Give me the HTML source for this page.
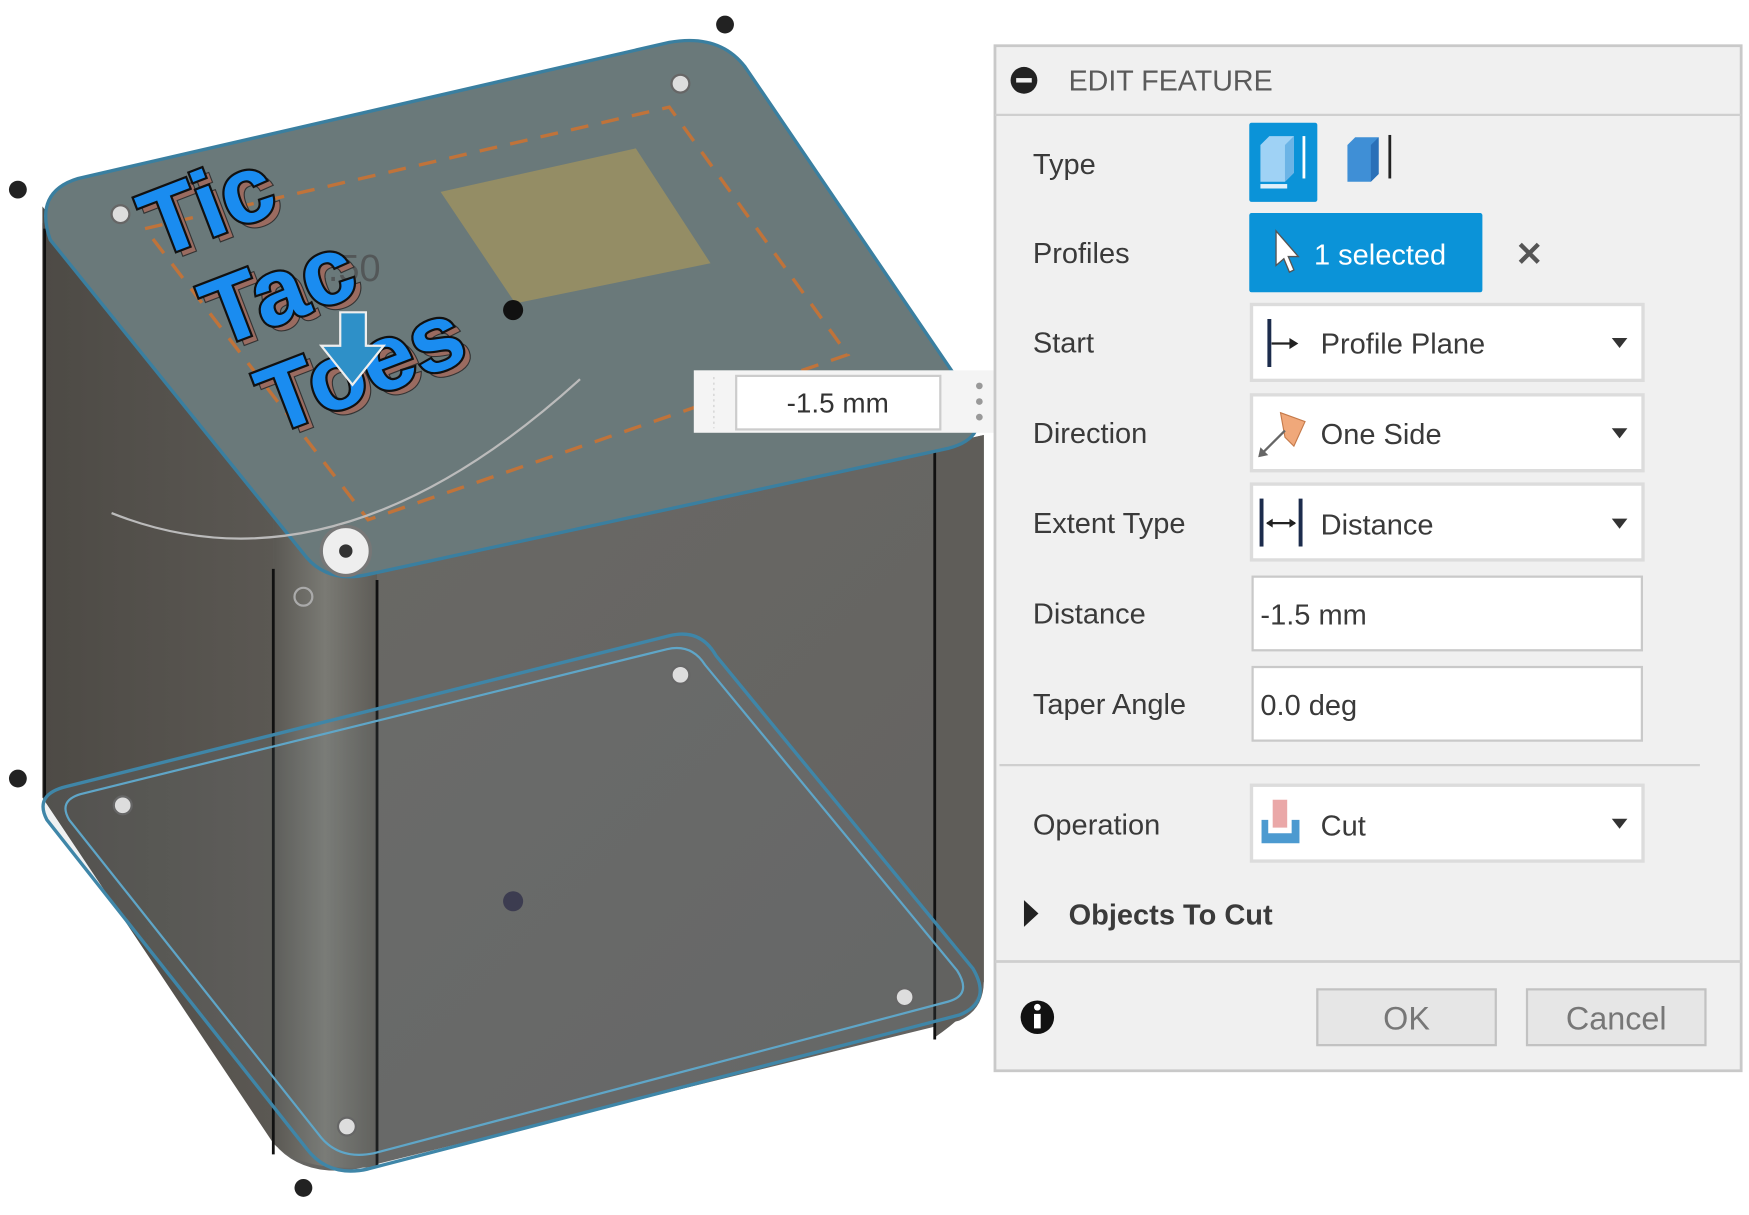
<!DOCTYPE html>
<html><head><meta charset="utf-8"><style>
html,body{margin:0;padding:0;background:#fff;width:1749px;height:1215px;overflow:hidden}
svg{display:block}
text{font-family:"Liberation Sans",Arial,sans-serif}
</style></head><body>
<svg width="1749" height="1215" viewBox="0 0 1568 1089.3" xmlns="http://www.w3.org/2000/svg">
<defs>
<linearGradient id="lf" x1="0" x2="1"><stop offset="0" stop-color="#4d4a45"/><stop offset="1" stop-color="#5b5853"/></linearGradient>
<linearGradient id="cr" x1="0" x2="1"><stop offset="0" stop-color="#5a5853"/><stop offset="0.5" stop-color="#7a7a74"/><stop offset="1" stop-color="#5e5c57"/></linearGradient>
<linearGradient id="ff" x1="0" y1="0" x2="1" y2="1"><stop offset="0" stop-color="#6c6b67"/><stop offset="1" stop-color="#636260"/></linearGradient>
</defs>
<path d="M38 200 L38 715 L250 1030 Q275 1055 320 1048 L860 915 Q882 905 882 880 L882 390 L300 520 Z" fill="url(#ff)"/>
<path d="M38 185 L38 715 L245 1025 L245 460 Z" fill="url(#lf)"/>
<path d="M245 460 L245 1025 Q270 1052 338 1046 L338 510 Z" fill="url(#cr)"/>
<path d="M838 400 L882 390 L882 880 Q875 905 838 930 Z" fill="#5f5d59"/>
<g stroke="#111" stroke-width="2.5">
<line x1="40" y1="205" x2="40" y2="715"/><line x1="245" y1="510" x2="245" y2="1035"/><line x1="338" y1="520" x2="338" y2="1045"/><line x1="838" y1="400" x2="838" y2="932"/>
</g>
<path d="M60 705 L600 570 Q628 563 642 588 L872 868 Q890 898 860 910 L330 1048 Q295 1056 275 1030 L42 735 Q30 712 60 705 Z" fill="rgba(120,140,145,0.12)" stroke="#3f86a8" stroke-width="3"/>
<path d="M72 712 L598 582 Q620 577 632 596 L858 870 Q872 892 850 898 L335 1034 Q305 1040 288 1020 L62 735 Q52 718 72 712 Z" fill="none" stroke="#5fa6c8" stroke-width="2"/>
<path d="M70 160 L600 38 Q645 30 668 60 L872 360 Q888 392 850 402 L330 515 Q295 523 275 500 L45 215 Q30 172 70 160 Z" fill="#6a797a" stroke="#3a7fa0" stroke-width="3"/>
<path d="M130 205 L600 96 L760 318 L330 466 Z" fill="none" stroke="#c0733a" stroke-width="3" stroke-dasharray="16 12"/>
<path d="M395 172 L570 133 L637 236 L462 272 Z" fill="#9b9161" opacity="0.85"/>
<path d="M100 460 Q300 540 520 340" fill="none" stroke="#bbb" stroke-width="2"/>
<text x="275" y="252" font-size="34" fill="#4a4a4a" opacity="0.7">1.50</text>
<g font-weight="bold" font-size="84" fill="#1a8cf0" stroke="#111" stroke-width="4" paint-order="stroke">
<g transform="translate(140,232) rotate(-21)"><text x="4" y="6" fill="#9a6b60" stroke="#333" stroke-width="2">Tic</text><text>Tic</text></g>
<g transform="translate(195,312) rotate(-21)"><text x="4" y="6" fill="#9a6b60" stroke="#333" stroke-width="2">Tac</text><text>Tac</text></g>
<g transform="translate(245,390) rotate(-21)"><text x="4" y="6" fill="#9a6b60" stroke="#333" stroke-width="2">Toes</text><text>Toes</text></g>
</g>
<path d="M305 280 L328 280 L328 310 L344 310 L316 345 L288 310 L305 310 Z" fill="#2e90c8" stroke="#eee" stroke-width="2"/>
<circle cx="460" cy="278" r="9" fill="#111"/>
<circle cx="310" cy="494" r="22" fill="#eee" stroke="#777" stroke-width="3"/><circle cx="310" cy="494" r="6" fill="#333"/>
<g fill="#222"><circle cx="650" cy="22" r="8"/><circle cx="16" cy="170" r="8"/><circle cx="16" cy="698" r="8"/><circle cx="272" cy="1065" r="8"/><circle cx="460" cy="808" r="9" fill="#3c3c50"/></g>
<g fill="#ddd" stroke="#666" stroke-width="2"><circle cx="610" cy="75" r="8"/><circle cx="108" cy="192" r="8"/><circle cx="610" cy="605" r="8"/><circle cx="110" cy="722" r="8"/><circle cx="811" cy="894" r="8"/><circle cx="311" cy="1010" r="8"/></g>
<circle cx="272" cy="535" r="8" fill="none" stroke="#aaa" stroke-width="2"/>
<rect x="622" y="332" width="270" height="56" fill="#f4f4f4"/>
<line x1="640" y1="338" x2="640" y2="384" stroke="#ccc" stroke-dasharray="2 3"/>
<rect x="660" y="337" width="183" height="48" fill="#fff" stroke="#ccc" stroke-width="2"/>
<text x="751" y="370" font-size="25" fill="#333" text-anchor="middle">-1.5 mm</text>
<g fill="#999"><circle cx="878" cy="346" r="3"/><circle cx="878" cy="360" r="3"/><circle cx="878" cy="374" r="3"/></g>
<rect x="892" y="41" width="669" height="919" fill="#f0f0f0" stroke="#c9c9c9" stroke-width="2.5"/>
<line x1="892" y1="103" x2="1561" y2="103" stroke="#cfcfcf" stroke-width="2"/>
<circle cx="918" cy="72" r="12" fill="#222"/><rect x="911" y="70" width="14" height="4" fill="#f0f0f0"/>
<text x="958" y="81" font-size="26" fill="#5a5a5a" textLength="183" lengthAdjust="spacingAndGlyphs">EDIT FEATURE</text>
<g font-size="26" fill="#3a3a3a">
<text x="926" y="156">Type</text>
<text x="926" y="236">Profiles</text>
<text x="926" y="316">Start</text>
<text x="926" y="397">Direction</text>
<text x="926" y="478">Extent Type</text>
<text x="926" y="559">Distance</text>
<text x="926" y="640">Taper Angle</text>
<text x="926" y="748">Operation</text>
</g>
<rect x="1120" y="110" width="61" height="71" rx="2" fill="#0b93d8"/>
<path d="M1130 130 L1138 122 L1160 122 L1160 155 L1152 163 L1130 163 Z" fill="#9fd2f5"/><path d="M1152 130 L1160 122 L1160 155 L1152 163 Z" fill="#6bb4e6"/>
<rect x="1130" y="165" width="24" height="4" fill="#e0f0fa"/><line x1="1169" y1="122" x2="1169" y2="160" stroke="#fff" stroke-width="2.5"/>
<path d="M1208 130 L1215 123 L1236 123 L1236 156 L1229 163 L1208 163 Z" fill="#3f8fd6"/><path d="M1229 130 L1236 123 L1236 156 L1229 163 Z" fill="#2a70b8"/>
<line x1="1246" y1="121" x2="1246" y2="160" stroke="#222" stroke-width="2.5"/>
<rect x="1120" y="191" width="209" height="71" rx="2" fill="#0b93d8"/>
<path d="M1144 207 L1144 238 L1151 232 L1156 244 L1160 242 L1155 230 L1164 230 Z" fill="#fff" stroke="#555" stroke-width="1.2"/>
<text x="1178" y="237" font-size="26" fill="#fff">1 selected</text>
<text x="1371" y="238" font-size="30" font-weight="bold" fill="#555" text-anchor="middle">✕</text>
<g fill="#fff" stroke="#dcdcdc" stroke-width="3">
<rect x="1122" y="273" width="351" height="68"/><rect x="1122" y="354" width="351" height="68"/><rect x="1122" y="434" width="351" height="68"/><rect x="1122" y="704" width="351" height="68"/>
</g>
<g fill="#fff" stroke="#c9c9c9" stroke-width="2"><rect x="1123" y="517" width="349" height="66"/><rect x="1123" y="598" width="349" height="66"/></g>
<g font-size="26" fill="#3a3a3a">
<text x="1184" y="317">Profile Plane</text>
<text x="1184" y="398">One Side</text>
<text x="1184" y="479">Distance</text>
<text x="1130" y="560">-1.5 mm</text>
<text x="1130" y="641">0.0 deg</text>
<text x="1184" y="749">Cut</text>
</g>
<g fill="#333"><path d="M1445 303 L1459 303 L1452 312 Z"/><path d="M1445 384 L1459 384 L1452 393 Z"/><path d="M1445 465 L1459 465 L1452 474 Z"/><path d="M1445 734 L1459 734 L1452 743 Z"/></g>
<line x1="1138" y1="286" x2="1138" y2="329" stroke="#1c2c4c" stroke-width="3.5"/><line x1="1140" y1="308" x2="1160" y2="308" stroke="#222" stroke-width="2"/><path d="M1156 303 L1164 308 L1156 313 Z" fill="#222"/>
<path d="M1148 370 L1170 378 L1160 400 L1152 392 Z" fill="#f0a87a" stroke="#c57a4a" stroke-width="1"/><line x1="1130" y1="408" x2="1152" y2="386" stroke="#666" stroke-width="2"/><path d="M1128 410 L1130 401 L1137 408 Z" fill="#666"/>
<line x1="1131" y1="447" x2="1131" y2="490" stroke="#1c2c4c" stroke-width="3.5"/><line x1="1166" y1="447" x2="1166" y2="490" stroke="#1c2c4c" stroke-width="3.5"/><line x1="1136" y1="469" x2="1161" y2="469" stroke="#222" stroke-width="2"/><path d="M1135 469 L1141 465 L1141 473 Z" fill="#222"/><path d="M1162 469 L1156 465 L1156 473 Z" fill="#222"/>
<rect x="1141" y="717" width="13" height="25" fill="#eaa8a8"/><path d="M1131 735 L1137 735 L1137 747 L1158 747 L1158 735 L1165 735 L1165 756 L1131 756 Z" fill="#4c9ad0"/>
<line x1="896" y1="686" x2="1524" y2="686" stroke="#cfcfcf" stroke-width="2"/>
<path d="M918 807 L918 831 L931 819 Z" fill="#222"/>
<text x="958" y="829" font-size="26" font-weight="bold" fill="#3a3a3a">Objects To Cut</text>
<line x1="892" y1="862" x2="1561" y2="862" stroke="#cfcfcf" stroke-width="2.5"/>
<circle cx="930" cy="912" r="15" fill="#111"/><rect x="927" y="909" width="6" height="13" fill="#fff"/><circle cx="930" cy="903" r="3" fill="#fff"/>
<rect x="1181" y="887" width="160" height="50" fill="#e6e6e6" stroke="#c2c2c2" stroke-width="2"/>
<rect x="1369" y="887" width="160" height="50" fill="#e6e6e6" stroke="#c2c2c2" stroke-width="2"/>
<text x="1261" y="923" font-size="29" fill="#777" text-anchor="middle">OK</text>
<text x="1449" y="923" font-size="29" fill="#777" text-anchor="middle">Cancel</text>
</svg>
</body></html>
